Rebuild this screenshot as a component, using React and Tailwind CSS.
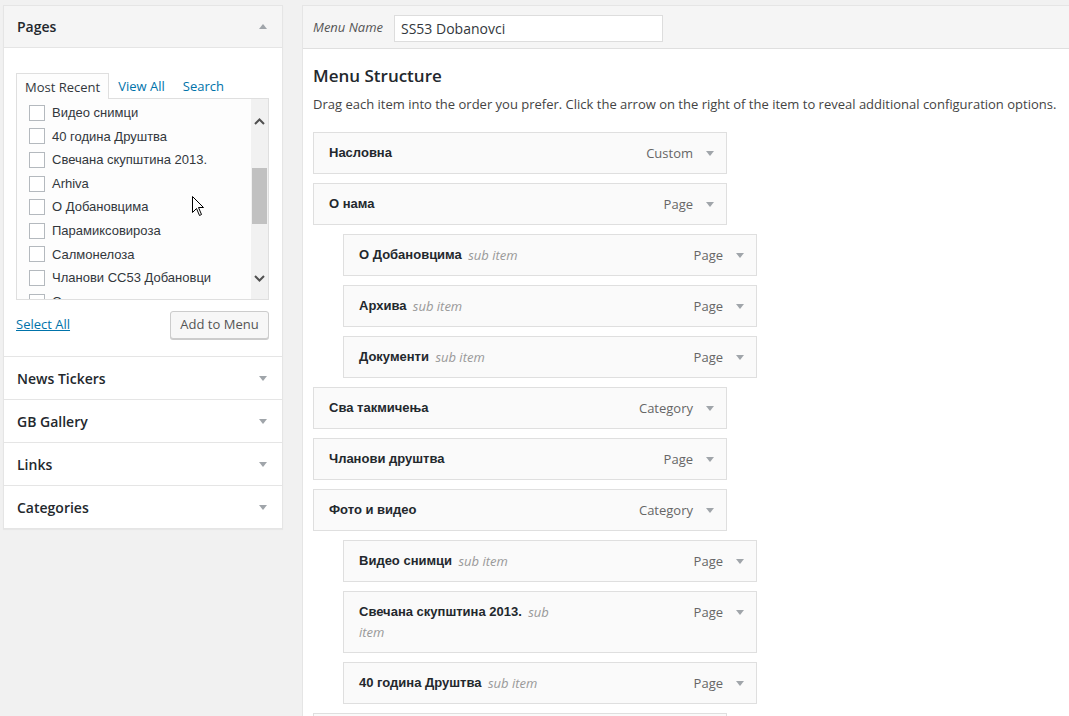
import React from 'react';

const OPEN = { fontFamily: '"Open Sans", "Liberation Sans", sans-serif' };
const ARIAL = { fontFamily: '"Liberation Sans", Arial, sans-serif' };

const pages = [
    'Видео снимци',
    '40 година Друштва',
    'Свечана скупштина 2013.',
    'Arhiva',
    'О Добановцима',
    'Парамиксовироза',
    'Салмонелоза',
    'Чланови СС53 Добановци',
    'О нама',
];

const menuItems = [
    { title: 'Насловна', type: 'Custom' },
    { title: 'О нама', type: 'Page' },
    { title: 'О Добановцима', type: 'Page', sub: true },
    { title: 'Архива', type: 'Page', sub: true },
    { title: 'Документи', type: 'Page', sub: true },
    { title: 'Сва такмичења', type: 'Category' },
    { title: 'Чланови друштва', type: 'Page' },
    { title: 'Фото и видео', type: 'Category' },
    { title: 'Видео снимци', type: 'Page', sub: true },
    { title: 'Свечана скупштина 2013.', type: 'Page', sub: true },
    { title: '40 година Друштва', type: 'Page', sub: true },
    { title: 'Контакт', type: 'Custom' },
];

const Triangle = ({ up = false, className = '' }) => (
    <svg width="8" height="5" viewBox="0 0 8 5" className={className}>
        {up
            ? <polygon points="0,5 8,5 4,0" fill="#a0a5aa" />
            : <polygon points="0,0 8,0 4,5" fill="#a0a5aa" />}
    </svg>
);

const Chevron = ({ up = false }) => (
    <svg width="11" height="7" viewBox="0 0 11 7">
        <polyline
            points={up ? '1,6 5.5,1.5 10,6' : '1,1 5.5,5.5 10,1'}
            fill="none"
            stroke="#505050"
            strokeWidth="2"
        />
    </svg>
);

const Section = ({ title }) => (
    <div className="h-[43px] border-t border-[#e5e5e5] flex items-center justify-between pl-[13px] pr-[15px] bg-white">
        <span className="text-[14px] font-semibold text-[#23282d]" style={OPEN}>{title}</span>
        <Triangle />
    </div>
);

const MenuItem = ({ item }) => (
    <div
        className={`w-[414px] border border-[#dfdfdf] bg-[#fafafa] flex items-start pl-[15px] pr-[12px] py-[10px] leading-[20px] text-[13px] ${item.sub ? 'ml-[30px]' : ''}`}
    >
        <div className="w-[205px] leading-[20px]">
            <span className="font-bold text-[#23282d] align-top" style={ARIAL}>{item.title}</span>
            {item.sub && (
                <>
                    {' '}
                    <span className="italic text-[#999] ml-[3px] align-top" style={OPEN}>sub item</span>
                </>
            )}
        </div>
        <div className="ml-auto flex items-center h-[20px]">
            <span className="text-[#666]" style={OPEN}>{item.type}</span>
            <Triangle className="ml-[13px]" />
        </div>
    </div>
);

export default function App() {
    return (
        <div className="relative min-h-screen bg-[#f1f1f1] flex items-start pt-[5px] pl-[3px]" style={OPEN}>
            {/* left column */}
            <div className="w-[280px] shrink-0 bg-white border border-[#e5e5e5] shadow-[0_1px_1px_rgba(0,0,0,0.04)]">
                <div className="h-[42px] bg-[#f5f5f5] border-b border-[#e5e5e5] flex items-center justify-between pl-[13px] pr-[15px]">
                    <span className="text-[14px] font-semibold text-[#23282d]">Pages</span>
                    <Triangle up />
                </div>
                <div className="pt-[24px] pb-[17px] pl-[12px] pr-[13px]">
                    <div className="flex items-end text-[13px] leading-[18px]">
                        <div className="relative z-10 -mb-px h-[26px] px-[8px] flex items-center border-t border-x border-[#dfdfdf] bg-[#fdfdfd] text-[#32373c]">
                            Most Recent
                        </div>
                        <div className="h-[26px] pt-[2px] px-[9px] flex items-center text-[#0073aa]">View All</div>
                        <div className="h-[26px] pt-[2px] px-[9px] flex items-center text-[#0073aa]">Search</div>
                    </div>
                    <div className="h-[202px] border border-[#dfdfdf] bg-[#fdfdfd] flex">
                        <div className="flex-1 overflow-hidden pt-[2px] pl-[12px]">
                            {pages.map((p, i) => (
                                <div key={i} className="h-[23.6px] flex items-center">
                                    <span className="w-[16px] h-[16px] border border-[#b4b9be] bg-white shrink-0" />
                                    <span className="ml-[7px] text-[13px] text-[#32373c]" style={ARIAL}>{p}</span>
                                </div>
                            ))}
                        </div>
                        <div className="w-[17px] bg-[#f1f1f1] flex flex-col items-center">
                            <div className="h-[42px] flex items-center justify-center pt-[2px]">
                                <Chevron up />
                            </div>
                            <div className="mt-[27px] w-[15px] h-[56px] bg-[#c1c1c1]" />
                            <div className="mt-auto h-[42px] flex items-center justify-center">
                                <Chevron />
                            </div>
                        </div>
                    </div>
                    <div className="flex items-center justify-between mt-[11px]">
                        <span className="text-[13px] text-[#0073aa] underline">Select All</span>
                        <button className="h-[28px] w-[99px] text-[13px] text-[#555] bg-[#f7f7f7] border border-[#cccccc] rounded-[3px] shadow-[0_1px_0_#cccccc]">
                            Add to Menu
                        </button>
                    </div>
                </div>
                <Section title="News Tickers" />
                <Section title="GB Gallery" />
                <Section title="Links" />
                <Section title="Categories" />
            </div>

            {/* right column */}
            <div className="ml-[19px] flex-1 min-h-[711px] bg-white border-t border-l border-[#e5e5e5]">
                <div className="h-[43px] pt-[2px] bg-[#f5f5f5] border-b border-[#dfdfdf] flex items-center pl-[10px]">
                    <span className="text-[13px] italic text-[#555]">Menu Name</span>
                    <div className="ml-[11px] w-[269px] h-[27px] border border-[#dddddd] bg-white flex items-center px-[6px] text-[14px] text-[#32373c]">
                        SS53 Dobanovci
                    </div>
                </div>
                <div className="pl-[10px] pt-[15px]">
                    <h3 className="text-[17px] leading-[24px] font-semibold text-[#23282d]">Menu Structure</h3>
                    <p className="mt-[6px] text-[13px] leading-[20px] text-[#444]">
                        Drag each item into the order you prefer. Click the arrow on the right of the item to reveal additional configuration options.
                    </p>
                    <div className="mt-[18px] flex flex-col gap-[9px]">
                        {menuItems.map((item, i) => (
                            <MenuItem key={i} item={item} />
                        ))}
                    </div>
                </div>
            </div>

            {/* mouse cursor */}
            <svg className="absolute left-[192px] top-[196px]" width="13" height="21" viewBox="0 0 13 21">
                <path d="M0.5 0.5 L0.5 16.5 L4.5 12.5 L7.5 19.5 L9.5 18.5 L6.5 11.5 L11.5 11.5 Z" fill="#ffffff" stroke="#000000" strokeWidth="1" />
            </svg>
        </div>
    );
}
